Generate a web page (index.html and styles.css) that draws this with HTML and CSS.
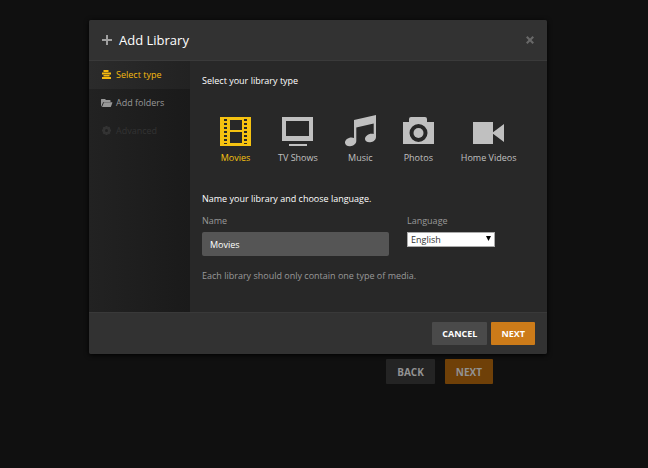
FILE: index.html
```html
<!DOCTYPE html>
<html lang="en">
<head>
<meta charset="utf-8">
<title>Add Library</title>
<meta name="viewport" content="width=device-width, initial-scale=1">
<link rel="stylesheet" href="styles.css">
</head>
<body>
<main class="page">
  <section class="dialog" role="dialog" aria-labelledby="dialog-title">
    <header class="dialog-header">
      <svg class="plus" viewBox="0 0 10 10" aria-hidden="true"><path d="M4 0h2v4h4v2H6v4H4V6H0V4h4z"/></svg>
      <h1 id="dialog-title" class="title">Add Library</h1>
      <button class="close" type="button" aria-label="Close">
        <svg viewBox="0 0 8 8" aria-hidden="true"><path d="M1.500 0 4 2.500 6.500 0 8 1.500 5.500 4 8 6.500 6.500 8 4 5.500 1.500 8 0 6.500 2.500 4 0 1.500z"/></svg>
      </button>
    </header>

    <div class="dialog-body">
      <nav class="steps" aria-label="Steps">
        <button class="step active" type="button">
          <svg viewBox="0 0 12 10" aria-hidden="true"><path d="M2.500 0h5v2h-5zM1 2.500h9v2H1zM2.500 5h6v1.500h-6zM1 7h9v2H1z"/></svg>
          Select type
        </button>
        <button class="step" type="button">
          <svg viewBox="0 0 12 10" aria-hidden="true"><path d="M0 1.500Q0 1 .5 1H4l1 1h4q.5 0 .5.500V4H3Q2.300 4 2 4.600L.3 8.500Q0 8.500 0 8zM3 4.300H11q.6 0 .4.500L10 8.500q-.2.500-.7.500H1z"/></svg>
          Add folders
        </button>
        <button class="step" type="button" disabled>
          <svg viewBox="0 0 12 10" aria-hidden="true"><path fill-rule="evenodd" d="M4.500 0h2l.3 1.300 1.200-.7L9.400 2l-.7 1.200 1.300.3v2l-1.300.3.7 1.200L8 8.400l-1.200-.7L6.500 9h-2l-.3-1.300-1.200.7L1.600 7l.7-1.200L1 5.500v-2l1.300-.3L1.600 2 3 .6l1.200.7zM5.500 3a1.500 1.500 0 1 0 0 3 1.500 1.500 0 0 0 0-3z"/></svg>
          Advanced
        </button>
      </nav>

      <form class="content" id="library-form">
        <h2 class="heading">Select your library type</h2>
        <div class="types">
          <button class="type selected" type="button" aria-pressed="true">
            <svg viewBox="0 0 31 31" aria-hidden="true"><path fill-rule="evenodd" d="M0 1h31v29H0zM10 4v10h12V4zM10 16v11h12V16zM4 3v2h3V3zM4 7v2h3V7zM4 11v2h3v-2zM4 15v2h3v-2zM4 19v2h3v-2zM4 23v2h3v-2zM4 27v1h3v-1zM24 3v2h3V3zM24 7v2h3V7zM24 11v2h3v-2zM24 15v2h3v-2zM24 19v2h3v-2zM24 23v2h3v-2zM24 27v1h3v-1z"/></svg>
            <span>Movies</span>
          </button>
          <button class="type" type="button" aria-pressed="false">
            <svg viewBox="0 0 31 31" aria-hidden="true"><path fill-rule="evenodd" d="M0 1h31v24H0zM4 5v15h23V5zM7 28h18v2H7z"/></svg>
            <span>TV Shows</span>
          </button>
          <button class="type" type="button" aria-pressed="false">
            <svg viewBox="0 0 31 31" aria-hidden="true"><path d="M9 4 31-1v22c0 2.800-2.500 5-5.700 5.200C22 26.500 20 25 20 23c0-2.700 3-5.300 6.500-5.300.8 0 1.500.1 2.200.4V7.500L11.300 11.500V25c0 2.800-2.900 5-6.200 5.200C2 30.300 0 28.700 0 26.700 0 24 3 21.600 6.500 21.600c.9 0 1.800.2 2.500.5z"/></svg>
            <span>Music</span>
          </button>
          <button class="type" type="button" aria-pressed="false">
            <svg viewBox="0 0 31 31" aria-hidden="true"><path fill-rule="evenodd" d="M6 6V3q0-2 2-2h14q2 0 2 2v3h7v22H0V6zM15.500 8a9 9 0 1 0 0 18 9 9 0 0 0 0-18z"/><circle cx="15.500" cy="17" r="5"/></svg>
            <span>Photos</span>
          </button>
          <button class="type" type="button" aria-pressed="false">
            <svg viewBox="0 0 31 31" aria-hidden="true"><path d="M0 6h20v22H0zM19 17 31 8v18z"/></svg>
            <span>Home Videos</span>
          </button>
        </div>

        <h2 class="heading">Name your library and choose language.</h2>
        <div class="fields">
          <div class="field name-field">
            <label for="name">Name</label>
            <input id="name" class="text-input" type="text" value="Movies">
          </div>
          <div class="field">
            <label for="language">Language</label>
            <div class="select-wrap">
              <select id="language" class="select"><option>English</option></select>
              <svg class="arrow" viewBox="0 0 5 5" aria-hidden="true"><path d="M0 0h5L2.500 5z"/></svg>
            </div>
          </div>
        </div>
        <p class="hint">Each library should only contain one type of media.</p>
      </form>
    </div>

    <footer class="dialog-footer">
      <button class="button" type="button">CANCEL</button>
      <button class="button primary" type="submit" form="library-form">NEXT</button>
    </footer>
  </section>

  <div class="setup-actions">
    <button class="button dimmed" type="button">BACK</button>
    <button class="button primary dimmed" type="button">NEXT</button>
  </div>
</main>
</body>
</html>
```

FILE: styles.css
```css
* { box-sizing: border-box; }

body {
  margin: 0;
  min-height: 100vh;
  padding-right: 12px;
  background: #101010;
  color: #fff;
  font: 9px/14px "Open Sans", sans-serif;
}

button, input, select { font: inherit; }

button {
  margin: 0;
  padding: 0;
  border: 0;
  background: none;
  color: inherit;
}

svg { display: block; fill: currentColor; overflow: visible; }

.page {
  max-width: 458px;
  margin: 0 auto;
  padding-top: 20px;
}

.dialog {
  border-radius: 2px;
  background: #282828;
  box-shadow: 0 1px 5px #000;
  overflow: hidden;
}

.dialog-header {
  display: flex;
  align-items: center;
  gap: 7px;
  height: 41px;
  padding: 0 13px;
  background: #323232;
  border-bottom: 1px solid #3a3a3a;
}

.plus { width: 10px; height: 10px; color: #a0a0a0; }

.title {
  flex: 1;
  margin: 0;
  font-size: 13px;
  font-weight: 400;
  line-height: 18px;
}

.close { color: #686868; }
.close svg { width: 8px; height: 8px; }

.dialog-body { display: flex; }

.steps {
  display: flex;
  flex-direction: column;
  width: 101px;
  background: linear-gradient(90deg, #222, #1a1a1a);
}

.step {
  display: flex;
  align-items: center;
  gap: 3px;
  height: 28px;
  padding: 0 12px;
  color: #999;
}

.step svg { width: 12px; height: 10px; }
.step.active { color: #f5ba0f; background: linear-gradient(90deg, #2b2b2b, #222); }
.step:disabled { color: #333; }

.content { flex: 1; padding: 13px 12px 29px; }

.heading {
  margin: 0;
  font-size: 9px;
  font-weight: 400;
}

.types {
  display: flex;
  gap: 27px;
  padding: 28px 18px 27px;
}

.type {
  display: flex;
  flex-direction: column;
  align-items: center;
  gap: 4px;
  min-width: 31px;
  color: #c0c0c0;
  white-space: nowrap;
}

.type svg { width: 31px; height: 31px; }
.type.selected { color: #f5c211; }

.fields { display: flex; gap: 18px; padding-top: 8px; color: #999; }
.field { display: flex; flex-direction: column; gap: 4px; }
.name-field { flex: 0 1 187px; min-width: 0; }

.text-input {
  width: 100%;
  height: 24px;
  padding: 0 8px;
  border: 0;
  border-radius: 2px;
  background: #555;
  color: #fff;
}

.select-wrap { position: relative; }

.select {
  display: block;
  width: 88px;
  height: 15px;
  padding: 0 3px;
  border: 1px solid #aaa;
  border-radius: 0;
  appearance: none;
  background: #fff;
  color: #333;
  line-height: 13px;
}

.arrow {
  position: absolute;
  top: 4px;
  right: 4px;
  width: 5px;
  height: 5px;
  color: #000;
  pointer-events: none;
}

.hint { margin: 13px 0 0; color: #999; }

.dialog-footer {
  display: flex;
  justify-content: flex-end;
  gap: 4px;
  padding: 9px 12px;
  background: #323232;
  border-top: 1px solid #393939;
}

.button {
  height: 23px;
  padding: 0 10px;
  border-radius: 1px;
  background: #4a4a4a;
  color: #fff;
  font-weight: 700;
}

.button.primary { background: #cc7b19; }

.setup-actions {
  display: flex;
  justify-content: flex-end;
  gap: 10px;
  padding: 5px 54px 0;
}

.button.dimmed {
  height: 25px;
  padding: 0 11px;
  background: #242424;
  color: #929292;
  font-size: 10px;
}

.button.primary.dimmed { background: #6f4008; }
```
